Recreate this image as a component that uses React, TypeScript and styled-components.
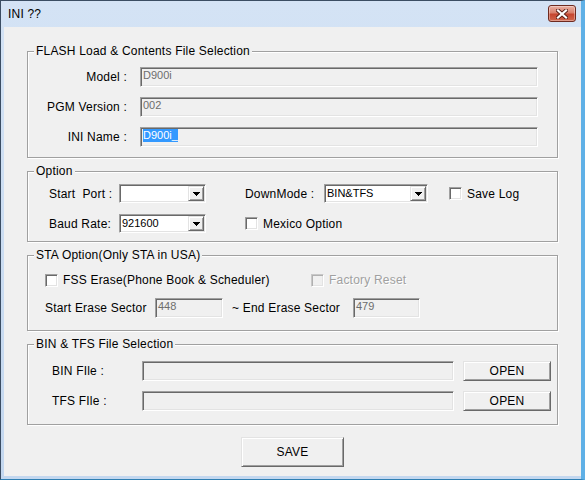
import styled, { createGlobalStyle } from "styled-components";

const GlobalStyle = createGlobalStyle`
  html, body {
    margin: 0;
    padding: 0;
  }
  body {
    font-family: "Liberation Sans", Arial, sans-serif;
    font-size: 12px;
    color: #000;
  }
`;

const Window = styled.div`
  box-sizing: border-box;
  width: 585px;
  height: 480px;
  display: flex;
  flex-direction: column;
  background: linear-gradient(180deg, #d4e3f5 0%, #c3d7ef 100%);
  border-top: 1px solid #3b4d63;
  border-left: 1px solid #3b4d63;
  border-right: 4px solid #5fb0e6;
  border-bottom: 1px solid #2f7fb2;
  padding: 0 0 3px 3px;
`;

const TitleBar = styled.div`
  flex: none;
  height: 26px;
  display: flex;
  align-items: center;
  justify-content: space-between;
  padding: 0 5px 0 4px;
`;

const Caption = styled.span`
  font-size: 12px;
  letter-spacing: 0.2px;
  margin-top: -1px;
`;

const CloseButton = styled.div`
  box-sizing: border-box;
  width: 28px;
  height: 17px;
  align-self: flex-start;
  margin-top: 4px;
  border: 1px solid #6e2a20;
  border-radius: 3px;
  background: linear-gradient(180deg, #eab0a3 0%, #d9806c 45%, #c6452f 55%, #d0664c 100%);
  box-shadow: inset 0 0 0 1px rgba(255, 255, 255, 0.35);
  display: flex;
  align-items: center;
  justify-content: center;
`;

const Client = styled.div`
  flex: 1;
  background: #f0f0f0;
  display: flex;
  flex-direction: column;
  gap: 6px;
  padding: 17px 23px 0 23px;
`;

const Group = styled.fieldset`
  margin: 0;
  padding: 0;
  min-width: 0;
  border: 1px solid #a0a0a0;
  box-shadow: inset 1px 1px 0 #fff, 1px 1px 0 #fff;
`;

const Legend = styled.legend`
  margin-left: 6px;
  padding: 0 2px;
  font-size: 12px;
  line-height: 14px;
  letter-spacing: 0.2px;
  background: #f0f0f0;
`;

const FieldGrid = styled.div`
  display: grid;
  grid-template-columns: 99px 1fr;
  column-gap: 13px;
  row-gap: 10px;
  align-items: center;
  padding: 9px 19px 10px 0;
`;

const Label = styled.span<{ $right?: boolean; $w?: number }>`
  font-size: 12px;
  letter-spacing: 0.2px;
  white-space: pre;
  text-align: ${(p) => (p.$right ? "right" : "left")};
  ${(p) => (p.$w ? `width: ${p.$w}px; flex: none;` : "")}
`;

const TextBox = styled.div<{ $w?: number }>`
  box-sizing: border-box;
  height: 20px;
  ${(p) => (p.$w ? `width: ${p.$w}px; flex: none;` : "")}
  background: #f0f0f0;
  border: 1px solid;
  border-color: #a0a0a0 #fff #fff #a0a0a0;
  box-shadow: inset 1px 1px 0 #696969, inset -1px -1px 0 #e3e3e3;
  padding: 1px 2px 0 2px;
  font-size: 11px;
  line-height: 12px;
  color: #6d6d6d;
  white-space: nowrap;
  overflow: hidden;
`;

const Selected = styled.span`
  display: inline-block;
  vertical-align: top;
  background: #3399ff;
  color: #fff;
  line-height: 13px;
`;

const OptionGrid = styled.div`
  display: grid;
  grid-template-columns: 70px 126px 79px 125px auto;
  grid-auto-rows: 19px;
  row-gap: 11px;
  align-items: center;
  padding: 6px 0 8px 21px;
`;

const Combo = styled.div<{ $w: number }>`
  box-sizing: border-box;
  width: ${(p) => p.$w}px;
  height: 19px;
  display: flex;
  background: #fff;
  border: 1px solid;
  border-color: #a0a0a0 #fff #fff #a0a0a0;
  box-shadow: inset 1px 1px 0 #696969, inset -1px -1px 0 #e3e3e3;
  padding: 1px;
`;

const ComboText = styled.span`
  flex: 1;
  font-size: 11px;
  line-height: 15px;
  padding-left: 1px;
  overflow: hidden;
  white-space: nowrap;
`;

const DropButton = styled.span`
  box-sizing: border-box;
  flex: none;
  width: 16px;
  background: #f0f0f0;
  border: 1px solid;
  border-color: #e3e3e3 #696969 #696969 #e3e3e3;
  box-shadow: inset 1px 1px 0 #fff, inset -1px -1px 0 #a0a0a0;
  display: flex;
  align-items: center;
  justify-content: center;
`;

const CheckItem = styled.span<{ $disabled?: boolean; $span?: string; $w?: number }>`
  display: flex;
  align-items: center;
  gap: 5px;
  font-size: 12px;
  letter-spacing: 0.2px;
  white-space: nowrap;
  color: ${(p) => (p.$disabled ? "#a0a0a0" : "#000")};
  text-shadow: ${(p) => (p.$disabled ? "1px 1px 0 #fff" : "none")};
  ${(p) => (p.$span ? `grid-column: ${p.$span};` : "")}
  ${(p) => (p.$w ? `width: ${p.$w}px; flex: none;` : "")}
`;

const CheckBox = styled.span<{ $disabled?: boolean }>`
  box-sizing: border-box;
  flex: none;
  width: 13px;
  height: 13px;
  background: ${(p) => (p.$disabled ? "#f0f0f0" : "#fff")};
  border: 1px solid;
  border-color: ${(p) =>
    p.$disabled ? "#c8c8c8 #fff #fff #c8c8c8" : "#a0a0a0 #fff #fff #a0a0a0"};
  box-shadow: ${(p) =>
    p.$disabled
      ? "inset 1px 1px 0 #b0b0b0, inset -1px -1px 0 #e3e3e3"
      : "inset 1px 1px 0 #696969, inset -1px -1px 0 #e3e3e3"};
`;

const StaBody = styled.div`
  display: flex;
  flex-direction: column;
  gap: 8px;
  padding: 8px 0 12px 17px;
`;

const StaRow = styled.div`
  display: flex;
  align-items: center;
  height: 20px;
`;

const FileGrid = styled.div`
  display: grid;
  grid-template-columns: 81px 1fr 88px;
  grid-auto-rows: 20px;
  column-gap: 9px;
  row-gap: 10px;
  align-items: center;
  padding: 10px 6px 13px 24px;
`;

const PushButton = styled.button<{ $w?: number; $h: number }>`
  box-sizing: border-box;
  ${(p) => (p.$w ? `width: ${p.$w}px;` : "width: 100%;")}
  height: ${(p) => p.$h}px;
  padding: 0;
  margin: 0;
  background: #f0f0f0;
  border: 1px solid;
  border-color: #e3e3e3 #696969 #696969 #e3e3e3;
  box-shadow: inset 1px 1px 0 #fff, inset -1px -1px 0 #a0a0a0;
  font-family: "Liberation Sans", Arial, sans-serif;
  font-size: 12px;
  letter-spacing: 0.2px;
  color: #000;
`;

const SaveRow = styled.div`
  display: flex;
  justify-content: center;
  padding-top: 6px;
`;

function Arrow() {
  return (
    <svg width="7" height="4" viewBox="0 0 7 4" shapeRendering="crispEdges">
      <path d="M0 0H7V1H6V2H5V3H4V4H3V3H2V2H1V1H0Z" fill="#000" />
    </svg>
  );
}

function CloseGlyph() {
  return (
    <svg width="12" height="10" viewBox="0 0 12 10">
      <path d="M2 1.5L10 8.5M10 1.5L2 8.5" stroke="#5a1d15" strokeWidth="4" strokeLinecap="square" />
      <path d="M2 1.5L10 8.5M10 1.5L2 8.5" stroke="#fff" strokeWidth="2.2" strokeLinecap="square" />
    </svg>
  );
}

function Dropdown({ width, value }: { width: number; value?: string }) {
  return (
    <Combo $w={width}>
      <ComboText>{value}</ComboText>
      <DropButton>
        <Arrow />
      </DropButton>
    </Combo>
  );
}

function Check({ label, disabled, span, width }: { label: string; disabled?: boolean; span?: string; width?: number }) {
  return (
    <CheckItem $disabled={disabled} $span={span} $w={width}>
      <CheckBox $disabled={disabled} />
      {label}
    </CheckItem>
  );
}

export default function App() {
  return (
    <>
      <GlobalStyle />
      <Window>
        <TitleBar>
          <Caption>INI ??</Caption>
          <CloseButton>
            <CloseGlyph />
          </CloseButton>
        </TitleBar>
        <Client>
          <Group>
            <Legend>FLASH Load &amp; Contents File Selection</Legend>
            <FieldGrid>
              <Label $right>Model :</Label>
              <TextBox>D900i</TextBox>
              <Label $right>PGM Version :</Label>
              <TextBox>002</TextBox>
              <Label $right>INI Name :</Label>
              <TextBox>
                <Selected>D900i_</Selected>
              </TextBox>
            </FieldGrid>
          </Group>

          <Group>
            <Legend>Option</Legend>
            <OptionGrid>
              <Label>{"Start  Port :"}</Label>
              <Dropdown width={87} />
              <Label>DownMode :</Label>
              <Dropdown width={104} value="BIN&TFS" />
              <Check label="Save Log" />
              <Label>Baud Rate:</Label>
              <Dropdown width={87} value="921600" />
              <Check label="Mexico Option" span="3 / span 2" />
            </OptionGrid>
          </Group>

          <Group>
            <Legend>STA Option(Only STA in USA)</Legend>
            <StaBody>
              <StaRow>
                <Check label="FSS Erase(Phone Book & Scheduler)" width={266} />
                <Check label="Factory Reset" disabled />
              </StaRow>
              <StaRow>
                <Label $w={110}>Start Erase Sector</Label>
                <TextBox $w={68}>448</TextBox>
                <Label $w={121} style={{ marginLeft: 9 }}>~ End Erase Sector</Label>
                <TextBox $w={67}>479</TextBox>
              </StaRow>
            </StaBody>
          </Group>

          <Group>
            <Legend>BIN &amp; TFS File Selection</Legend>
            <FileGrid>
              <Label>BIN FIle :</Label>
              <TextBox />
              <PushButton $h={20}>OPEN</PushButton>
              <Label>TFS FIle :</Label>
              <TextBox />
              <PushButton $h={20}>OPEN</PushButton>
            </FileGrid>
          </Group>

          <SaveRow>
            <PushButton $w={103} $h={30}>SAVE</PushButton>
          </SaveRow>
        </Client>
      </Window>
    </>
  );
}
